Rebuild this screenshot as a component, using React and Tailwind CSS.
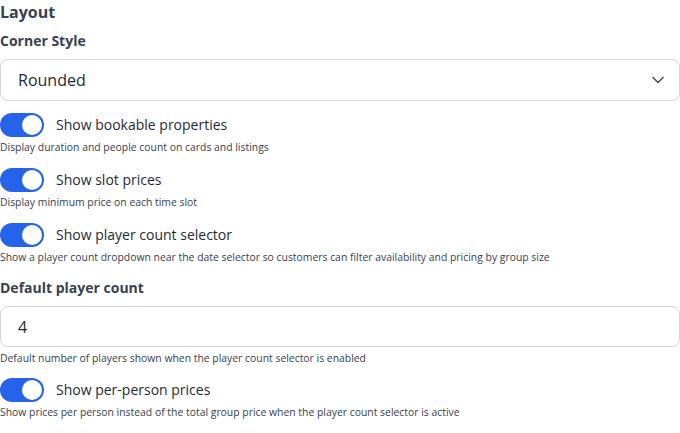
import { ChevronDown } from 'lucide-react';

const Toggle = ({ label, hint }) => (
    <div className="flex flex-col">
        <div className="flex items-center gap-3">
            <span className="relative inline-flex h-6 w-11 shrink-0 items-center rounded-full bg-[#2563eb]">
                <span className="absolute right-[2px] h-5 w-5 rounded-full bg-white" />
            </span>
            <span className="text-[14px] leading-6 text-[#1f2937]">{label}</span>
        </div>
        <p className="mt-[3px] text-[10.4px] leading-[14px] text-[#374151]">{hint}</p>
    </div>
);

export default function App() {
    return (
        <div className="w-[680px] bg-white font-['Open_Sans',sans-serif]">
            <h2 className="text-[16px] font-bold leading-6 text-[#374151]">Layout</h2>

            <label className="mt-[7px] block text-[14px] font-bold leading-5 text-[#374151]">Corner Style</label>
            <div className="mt-2 flex h-[42px] w-[680px] items-center justify-between rounded-lg border border-[#d1d5db] bg-white pl-[17px] pr-[11px]">
                <span className="text-[16px] text-[#1f2937]">Rounded</span>
                <ChevronDown className="h-5 w-5 text-[#4b5563]" strokeWidth={2} />
            </div>

            <div className="mt-3 flex flex-col gap-[14px]">
                <Toggle label="Show bookable properties" hint="Display duration and people count on cards and listings" />
                <Toggle label="Show slot prices" hint="Display minimum price on each time slot" />
                <Toggle
                    label="Show player count selector"
                    hint="Show a player count dropdown near the date selector so customers can filter availability and pricing by group size"
                />
            </div>

            <label className="mt-[14px] block text-[14px] font-bold leading-5 text-[#374151]">Default player count</label>
            <div className="mt-2 flex h-[41px] w-[680px] items-center rounded-lg border border-[#d1d5db] bg-white pl-[17px]">
                <span className="text-[16px] text-[#1f2937]">4</span>
            </div>
            <p className="mt-1 text-[10.4px] leading-[14px] text-[#374151]">
                Default number of players shown when the player count selector is enabled
            </p>

            <div className="mt-[13px]">
                <Toggle
                    label="Show per-person prices"
                    hint="Show prices per person instead of the total group price when the player count selector is active"
                />
            </div>
        </div>
    );
}
